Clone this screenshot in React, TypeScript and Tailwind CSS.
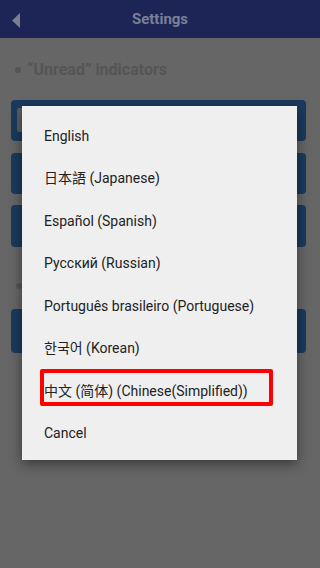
const languages = [
  'English',
  '日本語 (Japanese)',
  'Español (Spanish)',
  'Русский (Russian)',
  'Português brasileiro (Portuguese)',
  '한국어 (Korean)',
  '中文 (简体) (Chinese(Simplified))',
  'Cancel',
]

export default function App() {
  return (
    <div
      className="relative h-[568px] w-[320px] overflow-hidden bg-[#666666]"
      style={{ fontFamily: 'Roboto, "Noto Sans CJK SC", "Noto Sans CJK KR", sans-serif' }}
    >
      {/* Header */}
      <header className="relative flex h-[38px] items-center justify-center bg-[#1c2556]">
        <svg className="absolute left-[12px] top-[13px]" width="9" height="15" viewBox="0 0 9 15">
          <path d="M8 0 L0 7.5 L8 15 Z" fill="#7a7e8e" />
        </svg>
        <span className="text-[15px] font-bold text-[#7b7f96]">Settings</span>
      </header>

      {/* Dimmed settings page */}
      <div className="flex flex-col px-[11px] pr-[14px]">
        <div className="mt-[20px] flex items-center gap-[6px] pl-[4px] text-[16px] font-bold text-[#555555]">
          <span className="size-[6px] rounded-full bg-[#555555]" />
          <span>“Unread” indicators</span>
        </div>
        <div className="mt-[18px] h-[41px] rounded-[4px] bg-[#1b3a5e] p-[8px] pl-[6px]">
          <div className="h-[24px] w-[30px] rounded-[2px] bg-[#5e5e5e]" />
        </div>
        <div className="mt-[12px] h-[41px] rounded-[4px] bg-[#1b3a5e]" />
        <div className="mt-[11px] h-[42px] rounded-[4px] bg-[#1b3a5e]" />
        <div className="mt-[36px] pl-[5px]">
          <span className="block size-[6px] rounded-full bg-[#555555]" />
        </div>
        <div className="mt-[20px] h-[44px] rounded-[4px] bg-[#1b3a5e]" />
      </div>

      {/* Language dialog */}
      <div className="absolute left-[22px] top-[106px] w-[275px] bg-[#efefef] pt-[9px] pb-[5px] shadow-[0_4px_12px_rgba(0,0,0,0.45)]">
        {languages.map((lang, i) => (
          <div key={lang} className="relative flex h-[42.5px] items-center pl-[22px] text-[14px] text-[#222222]">
            {i === 6 && (
              <div className="absolute left-[18px] top-[-1px] h-[37px] w-[233px] rounded-[2px] border-[4px] border-[#ff0000]" />
            )}
            <span className="relative">{lang}</span>
          </div>
        ))}
      </div>
    </div>
  )
}
